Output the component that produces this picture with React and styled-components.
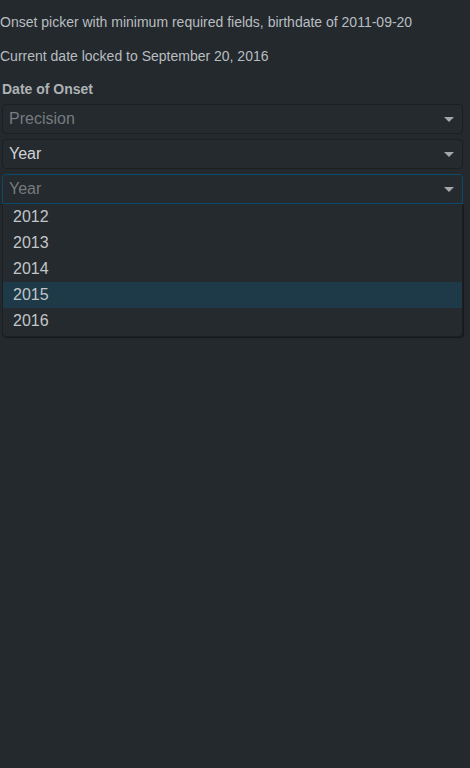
import styled, { createGlobalStyle } from 'styled-components';

const GlobalStyle = createGlobalStyle`
    html, body {
        margin: 0;
        padding: 0;
        background-color: #23292d;
    }

    body {
        font-family: "Liberation Sans", Arial, sans-serif;
        color: #c2c6c9;
        min-height: 768px;
    }
`;

const Page = styled.div`
    padding-top: 12px;
`;

const Note = styled.p`
    margin: 0 0 14px;
    font-size: 14px;
    line-height: 20px;
    color: #b9bdc0;
`;

const Field = styled.div`
    padding: 0 7px 0 2px;
    margin-top: -1px;
`;

const Label = styled.div`
    font-size: 14px;
    font-weight: bold;
    line-height: 20px;
    color: #aeb2b5;
`;

const SelectWrap = styled.div`
    position: relative;
    margin-top: 5px;
`;

const Control = styled.div`
    display: flex;
    align-items: center;
    height: 28px;
    padding: 0 8px 0 6px;
    border: 1px solid ${props => (props.focused ? '#0b4a6d' : '#1a1f22')};
    border-radius: ${props => (props.open ? '4px 4px 0 0' : '4px')};
    background-color: #242a2e;
    font-size: 16px;
`;

const Value = styled.span`
    flex: 1;
    color: ${props => (props.placeholder ? '#767b7f' : '#d0d3d6')};
`;

const Arrow = styled.span`
    width: 0;
    height: 0;
    border-style: solid;
    border-width: 5px 5px 0;
    border-color: #a3a7aa transparent transparent;
`;

const Menu = styled.div`
    border: 1px solid #1a1f22;
    border-top: none;
    border-radius: 0 0 4px 4px;
    background-color: #242a2e;
    box-shadow: 1px 1px 1px rgba(0, 0, 0, 0.4);
    padding-bottom: 2px;
`;

const Option = styled.div`
    height: 26px;
    line-height: 26px;
    padding-left: 10px;
    font-size: 16px;
    color: #c2c6c9;
    background-color: ${props => (props.active ? '#1e3947' : 'transparent')};
`;

const years = [2012, 2013, 2014, 2015, 2016];

function Select({ value, placeholder, focused, open, children }) {
    return (
        <SelectWrap>
            <Control focused={focused} open={open}>
                <Value placeholder={value ? undefined : 'true'}>{value || placeholder}</Value>
                <Arrow />
            </Control>
            {open && <Menu>{children}</Menu>}
        </SelectWrap>
    );
}

export default function App() {
    return (
        <Page>
            <GlobalStyle />
            <Note>Onset picker with minimum required fields, birthdate of 2011-09-20</Note>
            <Note>Current date locked to September 20, 2016</Note>
            <Field>
                <Label>Date of Onset</Label>
                <Select placeholder="Precision" />
                <Select value="Year" />
                <Select placeholder="Year" focused open>
                    {years.map(y => (
                        <Option key={y} active={y === 2015}>{y}</Option>
                    ))}
                </Select>
            </Field>
        </Page>
    );
}
